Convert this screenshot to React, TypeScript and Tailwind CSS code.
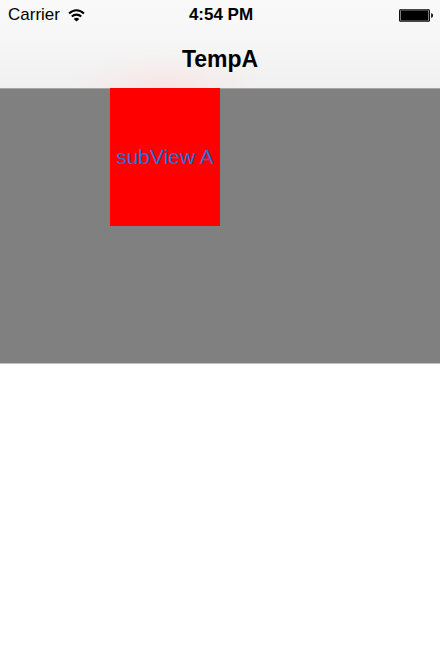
function WifiIcon() {
  return (
    <svg viewBox="0 0 18 13" className="h-[13px] w-[18px]" fill="none" stroke="black" aria-hidden="true">
      <path d="M1.1 4.6C5.5 0.2 11.5 0.2 15.9 4.6" strokeWidth="2.1" />
      <path d="M3.8 7.6C6.5 4.9 10.5 4.9 13.2 7.6" strokeWidth="2.1" />
      <path d="M8.5 12.6L5.7 9.9C7.2 8.3 9.8 8.3 11.3 9.9Z" fill="black" stroke="none" />
    </svg>
  );
}

function BatteryIcon() {
  return (
    <svg viewBox="0 0 35 13" className="h-[13px] w-[35px]" aria-hidden="true">
      <rect width="31" height="13" rx="1.8" fill="#111" />
      <rect x="1.5" y="1" width="28" height="11" rx="0.8" fill="black" stroke="#8c8c8c" strokeWidth="0.9" />
      <path d="M32.2 4C33.5 4.4 34 5.4 34 6.5S33.5 8.6 32.2 9Z" fill="black" />
    </svg>
  );
}

function StatusBar() {
  return (
    <div className="grid h-[30px] grid-cols-3 items-center pl-2 pr-1.5 text-[17px] leading-[30px]">
      <div className="flex items-center gap-2">
        <span>Carrier</span>
        <WifiIcon />
      </div>
      <span className="text-center font-bold">4:54 PM</span>
      <div className="flex justify-end">
        <BatteryIcon />
      </div>
    </div>
  );
}

export default function App() {
  return (
    <div className="min-h-screen bg-white font-['Liberation_Sans',Arial,sans-serif] text-black">
      <header className="h-[88px] bg-[radial-gradient(ellipse_100px_40px_at_37.5%_100%,rgba(255,220,220,0.6),rgba(255,225,225,0.25)_55%,rgba(255,230,230,0)),linear-gradient(#f9f9f9,#f7f7f7_40%,#f0f0f0)]">
        <StatusBar />
        <h1 className="text-center text-[23px] font-bold leading-[58px]">TempA</h1>
      </header>

      <main className="h-[276px] border-b border-t border-b-[#bdbdbd] border-t-[#a6a6a6] bg-[#808080]">
        <button
          type="button"
          className="-mt-px ml-[25%] flex h-[138px] w-1/4 items-center justify-center whitespace-nowrap bg-[#ff0000] text-[21px] text-[#1f70dc]"
        >
          subView A
        </button>
      </main>
    </div>
  );
}
